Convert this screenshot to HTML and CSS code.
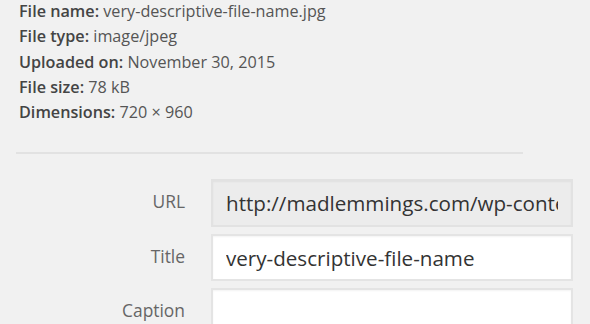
FILE: index.html
```html
<!DOCTYPE html>
<html lang="en">
  <head>
    <meta charset="UTF-8" />
    <title>Attachment Details</title>
    <link rel="stylesheet" href="styles.css">
  </head>
  <body>
    <div class="details">
      <div class="file-info">
        <div><strong>File name:</strong> very-descriptive-file-name.jpg</div>
        <div><strong>File type:</strong> image/jpeg</div>
        <div><strong>Uploaded on:</strong> November 30, 2015</div>
        <div><strong>File size:</strong> 78 kB</div>
        <div><strong>Dimensions:</strong> 720 × 960</div>
      </div>

      <hr class="divider" />

      <div class="settings">
        <label class="setting">
          <span class="name">URL</span>
          <input class="field readonly" type="text" value="http://madlemmings.com/wp-content/uploads/2015/11/very-descriptive-file-name.jpg" readonly />
        </label>
        <label class="setting">
          <span class="name">Title</span>
          <input class="field" type="text" value="very-descriptive-file-name" />
        </label>
        <label class="setting">
          <span class="name">Caption</span>
          <textarea class="field area"></textarea>
        </label>
      </div>
    </div>
  </body>
</html>
```

FILE: styles.css
```css
/* Global Styles */
* {
  margin: 0;
  padding: 0;
  box-sizing: border-box;
  font-family: "Open Sans", sans-serif;
}

body {
  background-color: #f1f1f1;
  color: #555;
  overflow: hidden;
}

.details {
  height: 324px;
  overflow: hidden;
  padding: 0 17px 0 16px;
}

/* File info */
.file-info {
  padding-left: 3px;
  margin-top: -1px;
  font-size: 16.2px;
  line-height: 25.25px;
}

.file-info strong {
  font-weight: 600;
  color: #444;
}

.divider {
  border: none;
  border-top: 2px solid #e2e2e2;
  width: 507px;
  margin: 27px 0 25px;
}

/* Settings */
.settings {
  display: flex;
  flex-direction: column;
  gap: 7px;
}

.setting {
  display: flex;
  align-items: flex-start;
}

.setting .name {
  width: 169px;
  padding-top: 11px;
  text-align: right;
  font-size: 17.4px;
  line-height: 22px;
  color: #666;
}

.field {
  margin-left: 26px;
  width: 362px;
  height: 47px;
  padding: 0 13px;
  border: 2px solid #e4e4e4;
  background: #fff;
  color: #333;
  font-size: 20.6px;
  outline: none;
  box-shadow: inset 0 1px 2px rgba(0, 0, 0, 0.05);
}

.field.readonly {
  height: 48px;
  background: #ececec;
  border-color: #e2e2e2;
}

.area {
  height: 60px;
  resize: none;
}
```
